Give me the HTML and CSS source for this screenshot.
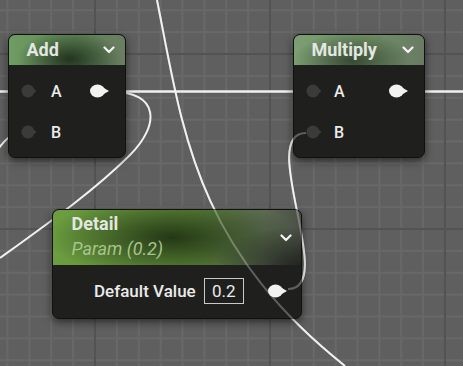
FILE: index.html
```html
<!DOCTYPE html>
<html lang="en">
<head>
    <meta charset="UTF-8">
    <meta name="viewport" content="width=device-width, initial-scale=1.0">
    <title>Material Graph</title>
    <link rel="stylesheet" href="styles.css">
</head>
<body>
    <div class="graph">
        <!-- wires behind the nodes -->
        <svg class="wires" width="463" height="366" viewBox="0 0 463 366">
            <path class="wire wire-main" d="M0,91.5 H463"/>
            <path class="wire" d="M157,0 C183,130 194,246 345,366"/>
            <path class="wire" d="M288,289 C338,289 256,133 306,133"/>
            <path class="wire" d="M22,133 C12,133 6,138 -4,152"/>
            <path class="wire" d="M110,91.5 C160,91.5 160,125 130,155 C95,190 50,222 0,258"/>
        </svg>

        <div class="node node-add">
            <div class="node-head">
                <span class="node-title">Add</span>
                <svg class="chev" width="12" height="8" viewBox="0 0 12 8"><polyline points="1.5,1.5 6,6 10.5,1.5"/></svg>
            </div>
            <div class="node-body">
                <div class="pin-row">
                    <svg class="pin-in" width="16" height="14" viewBox="0 0 16 14"><circle cx="7" cy="7" r="6.5"/><path d="M12.5,4.5 L15.5,7 L12.5,9.5 Z"/></svg>
                    <span class="pin-label">A</span>
                    <svg class="pin-out" width="20" height="14" viewBox="0 0 20 14"><ellipse cx="7.5" cy="7" rx="7.5" ry="6.5"/><path d="M13,3.5 L19,7 L13,10.5 Z"/></svg>
                </div>
                <div class="pin-row">
                    <svg class="pin-in" width="16" height="14" viewBox="0 0 16 14"><circle cx="7" cy="7" r="6.5"/><path d="M12.5,4.5 L15.5,7 L12.5,9.5 Z"/></svg>
                    <span class="pin-label">B</span>
                </div>
            </div>
        </div>

        <div class="node node-mul">
            <div class="node-head">
                <span class="node-title">Multiply</span>
                <svg class="chev" width="12" height="8" viewBox="0 0 12 8"><polyline points="1.5,1.5 6,6 10.5,1.5"/></svg>
            </div>
            <div class="node-body">
                <div class="pin-row">
                    <svg class="pin-in" width="16" height="14" viewBox="0 0 16 14"><circle cx="7" cy="7" r="6.5"/><path d="M12.5,4.5 L15.5,7 L12.5,9.5 Z"/></svg>
                    <span class="pin-label">A</span>
                    <svg class="pin-out" width="20" height="14" viewBox="0 0 20 14"><ellipse cx="7.5" cy="7" rx="7.5" ry="6.5"/><path d="M13,3.5 L19,7 L13,10.5 Z"/></svg>
                </div>
                <div class="pin-row">
                    <svg class="pin-in" width="16" height="14" viewBox="0 0 16 14"><circle cx="7" cy="7" r="6.5"/><path d="M12.5,4.5 L15.5,7 L12.5,9.5 Z"/></svg>
                    <span class="pin-label">B</span>
                </div>
            </div>
        </div>

        <div class="node node-param">
            <div class="node-head">
                <div class="head-text">
                    <span class="node-title">Detail</span>
                    <span class="node-sub">Param (0.2)</span>
                </div>
                <svg class="chev" width="12" height="8" viewBox="0 0 12 8"><polyline points="1.5,1.5 6,6 10.5,1.5"/></svg>
            </div>
            <div class="node-body">
                <div class="pin-row">
                    <span class="value-label">Default Value</span>
                    <span class="value-box">0.2</span>
                    <svg class="pin-out" width="20" height="14" viewBox="0 0 20 14"><ellipse cx="7.5" cy="7" rx="7.5" ry="6.5"/><path d="M13,3.5 L19,7 L13,10.5 Z"/></svg>
                </div>
            </div>
        </div>

        <!-- wires seen faintly through the parameter node -->
        <svg class="wires wires-top" width="463" height="366" viewBox="0 0 463 366">
            <path class="wire" d="M157,0 C183,130 194,246 345,366"/>
            <path class="wire" d="M288,289 C338,289 256,133 306,133"/>
        </svg>
    </div>
</body>
</html>
```

FILE: styles.css
```css
body {
    margin: 0;
    overflow: hidden;
    font-family: Roboto, "Liberation Sans", sans-serif;
}

.graph {
    position: relative;
    width: 463px;
    height: 366px;
    overflow: hidden;
    background-color: #5f5f5f;
    background-image:
        linear-gradient(90deg, #535353 2px, transparent 2px),
        linear-gradient(#535353 2px, transparent 2px),
        linear-gradient(90deg, #686868 2px, transparent 2px),
        linear-gradient(#686868 2px, transparent 2px);
    background-size: 175px 175px, 175px 175px, 21.875px 21.875px, 21.875px 21.875px;
    background-position: 94px 53px;
}

.wires {
    position: absolute;
    left: 0;
    top: 0;
}

.wires-top {
    opacity: 0.3;
}

.wire {
    fill: none;
    stroke: #f1f1f1;
    stroke-width: 2;
}

.wire-main {
    stroke-width: 2.5;
}

/* nodes */
.node {
    position: absolute;
    box-sizing: border-box;
    border: 1.5px solid #111210;
    border-radius: 7px;
    background-color: #1f201e;
    box-shadow: 0 3px 8px rgba(0, 0, 0, 0.55);
    overflow: hidden;
    color: #ebebeb;
}

.node-add {
    left: 8px;
    top: 34px;
    width: 118px;
    height: 124px;
}

.node-mul {
    left: 293px;
    top: 34px;
    width: 132px;
    height: 124px;
}

.node-param {
    left: 52px;
    top: 209px;
    width: 250px;
    height: 110px;
}

.node-head {
    display: flex;
    align-items: center;
    justify-content: space-between;
    height: 29.5px;
    padding: 0 10px 0 17.5px;
}

.node-add .node-head {
    background:
        radial-gradient(ellipse 45% 95% at 52% 80%, rgba(24, 36, 22, 0.85), rgba(24, 36, 22, 0)),
        linear-gradient(90deg, #6f9c62, #5f8756 60%, #6a7d63);
}

.node-mul .node-head {
    background:
        radial-gradient(ellipse 45% 95% at 45% 85%, rgba(30, 42, 28, 0.7), rgba(30, 42, 28, 0)),
        linear-gradient(90deg, #7c9e72, #6f8f66 60%, #6a7a64);
}

.node-title {
    font-size: 18px;
    font-weight: 700;
    color: #e3e6e1;
    line-height: 22px;
}

.chev {
    fill: none;
    stroke: #f4f4f4;
    stroke-width: 2.2;
    stroke-linecap: round;
    stroke-linejoin: round;
}

.node-body {
    padding: 6px 15px 4px 12px;
}

.pin-row {
    display: flex;
    align-items: center;
    height: 41px;
}

.pin-in {
    fill: #3b3c3a;
    margin-right: 14px;
}

.pin-out {
    fill: #f2f2f2;
    margin-left: auto;
}

.pin-label {
    font-size: 16px;
    font-weight: 500;
}

.node-mul .pin-in {
    margin-right: 12px;
}

/* parameter node */
.node-param .node-head {
    height: 52.5px;
    align-items: flex-start;
    padding: 2.5px 9px 0 18.5px;
    background:
        radial-gradient(ellipse 50% 75% at 48% 50%, rgba(30, 46, 18, 0.9), rgba(30, 46, 18, 0)),
        radial-gradient(ellipse 35% 70% at 100% 100%, rgba(30, 32, 28, 0.9), rgba(30, 32, 28, 0)),
        linear-gradient(90deg, #6c9d3f, #5f8c39 55%, #5d6b53 85%, #4a4f46);
}

.node-param .chev {
    margin-top: 21px;
}

.head-text {
    display: flex;
    flex-direction: column;
    gap: 3px;
}

.node-sub {
    font-size: 18px;
    font-style: italic;
    color: #a6c48c;
    line-height: 22px;
}

.node-param .node-body {
    padding: 6px 13px 0 41px;
}

.node-param .pin-row {
    height: 40px;
}

.value-label {
    font-size: 17px;
    font-weight: 500;
    margin-right: 8px;
}

.value-box {
    box-sizing: border-box;
    width: 40px;
    height: 26px;
    border: 1px solid #c9c9c9;
    font-size: 17px;
    line-height: 24px;
    text-align: center;
}
```
